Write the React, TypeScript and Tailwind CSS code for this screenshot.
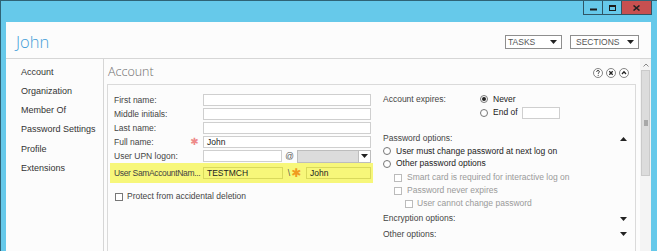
import React from 'react'

const navItems = ['Account', 'Organization', 'Member Of', 'Password Settings', 'Profile', 'Extensions']

function TriDown({ className = '' }: { className?: string }) {
  return (
    <svg width="7" height="4" viewBox="0 0 7 4" className={className}>
      <path d="M0 0H7L3.5 4Z" fill="#222" />
    </svg>
  )
}

function TriUp() {
  return (
    <svg width="7" height="4" viewBox="0 0 7 4">
      <path d="M0 4H7L3.5 0Z" fill="#222" />
    </svg>
  )
}

function Radio({ on = false }: { on?: boolean }) {
  return (
    <span className="w-[8px] h-[8px] rounded-full border border-[#777] bg-white flex items-center justify-center shrink-0">
      {on && <span className="w-[4px] h-[4px] rounded-full bg-[#222]" />}
    </span>
  )
}

function Check({ dim = false }: { dim?: boolean }) {
  return <span className={`w-[8px] h-[8px] border bg-white shrink-0 ${dim ? 'border-[#bbb]' : 'border-[#777]'}`} />
}

function Input({ w, yellow = false, value = '' }: { w: string; yellow?: boolean; value?: string }) {
  return (
    <div className={`${w} h-[12px] border flex items-center pl-[3px] text-[8.5px] text-[#222] ${yellow ? 'bg-[#f7f77a] border-[#d9d95c]' : 'bg-white border-[#cfcfcf]'}`}>
      {value}
    </div>
  )
}

function Star({ color, size }: { color: string; size: string }) {
  return <span className={`font-['DejaVu_Sans',sans-serif] leading-none ${size} ${color}`}>✱</span>
}

function CircleIcon({ kind }: { kind: 'help' | 'close' | 'up' }) {
  return (
    <svg width="10" height="10" viewBox="0 0 10 10">
      <circle cx="5" cy="5" r="4.5" fill="#fff" stroke="#666" strokeWidth="0.8" />
      {kind === 'help' && (
        <>
          <path d="M3.6 3.8C3.6 2.9 4.2 2.5 5 2.5C5.8 2.5 6.4 3 6.4 3.7C6.4 4.6 5.2 4.7 5.2 5.8" fill="none" stroke="#222" strokeWidth="0.9" />
          <circle cx="5.2" cy="7.2" r="0.55" fill="#222" />
        </>
      )}
      {kind === 'close' && <path d="M3.3 3.3L6.7 6.7M6.7 3.3L3.3 6.7" stroke="#222" strokeWidth="1.3" />}
      {kind === 'up' && <path d="M3 6L5 3.8L7 6" fill="none" stroke="#222" strokeWidth="1.3" />}
    </svg>
  )
}

export default function App() {
  return (
    <div className="w-[657px] h-[251px] overflow-hidden bg-[#66c9ea] border-l border-t border-[#2f6376] flex flex-col font-['Liberation_Sans',Arial,sans-serif] text-[#333]">
      {/* title bar */}
      <div className="h-[21px] shrink-0 flex justify-end items-start pr-[5px]">
        <div className="flex h-[14px] border border-t-0 border-[#2f5565]">
          <div className="w-[19px] flex items-center justify-center border-r border-[#2f5565]">
            <svg width="7" height="6" viewBox="0 0 7 6">
              <rect x="0" y="3.5" width="7" height="2" fill="#1d1d1d" />
            </svg>
          </div>
          <div className="w-[19px] flex items-center justify-center border-r border-[#2f5565]">
            <svg width="7" height="6" viewBox="0 0 7 6">
              <rect x="0.5" y="0.5" width="6" height="5" fill="none" stroke="#1d1d1d" strokeWidth="1" />
              <rect x="0" y="0" width="7" height="2" fill="#1d1d1d" />
            </svg>
          </div>
          <div className="w-[29px] bg-[#c75050] flex items-center justify-center">
            <svg width="7" height="6" viewBox="0 0 7 6">
              <path d="M0.5 0.5L6.5 5.5M6.5 0.5L0.5 5.5" stroke="#222" strokeWidth="1.6" />
            </svg>
          </div>
        </div>
      </div>

      <div className="flex-1 ml-[5px] mr-[6px] bg-[#fcfcfc] flex flex-col min-h-0">
        {/* header */}
        <div className="h-[37px] shrink-0 border-b border-[#d6d6d6] flex items-center justify-between pl-[10px] pr-[12px] pt-[4px]">
          <span className="font-['Open_Sans',sans-serif] font-light text-[16.5px] text-[#3f9dd8] leading-none">John</span>
          <div className="flex gap-[8px]">
            <div className="w-[57px] h-[14px] border border-[#8e8e8e] bg-white flex items-center justify-between pl-[2px] pr-[4px] text-[8.5px] text-[#555]">
              TASKS <TriDown />
            </div>
            <div className="w-[69px] h-[14px] border border-[#8e8e8e] bg-white flex items-center justify-between pl-[5px] pr-[4px] text-[8.5px] text-[#555]">
              SECTIONS <TriDown />
            </div>
          </div>
        </div>

        <div className="flex-1 flex min-h-0">
          {/* nav */}
          <div className="w-[98px] shrink-0 border-r border-[#d6d6d6] pl-[15px] pt-[4px] flex flex-col text-[9px] text-[#333]">
            {navItems.map(n => (
              <div key={n} className="h-[19.2px] flex items-center">{n}</div>
            ))}
          </div>

          {/* main */}
          <div className="flex-1 flex min-w-0">
            <div className="flex-1 flex flex-col pl-[3px] pr-[4px] min-w-0">
              <div className="h-[25px] shrink-0 flex items-center justify-between pl-[1px] pr-[7px]">
                <span className="font-['Open_Sans',sans-serif] font-light text-[12.5px] text-[#6f6f6f] leading-none pt-[2px]">Account</span>
                <div className="flex gap-[3px] mt-[3px]">
                  <CircleIcon kind="help" />
                  <CircleIcon kind="close" />
                  <CircleIcon kind="up" />
                </div>
              </div>

              <div className="flex-1 border border-b-0 border-[#dadada] flex text-[8.5px] text-[#444]">
                {/* left column */}
                <div className="w-[265px] shrink-0 pl-[2px] pt-[8px] flex flex-col">
                  {['First name:', 'Middle initials:', 'Last name:'].map(l => (
                    <div key={l} className="h-[14px] flex items-center pl-[4px]">
                      <span className="w-[89px]">{l}</span>
                      <Input w="w-[168px]" />
                    </div>
                  ))}
                  <div className="h-[14px] flex items-center pl-[4px]">
                    <span className="w-[72px]">Full name:</span>
                    <span className="w-[17px] flex justify-center"><Star color="text-[#ee8a8a]" size="text-[10px]" /></span>
                    <Input w="w-[168px]" value="John" />
                  </div>
                  <div className="h-[14px] flex items-center pl-[4px]">
                    <span className="w-[89px]">User UPN logon:</span>
                    <Input w="w-[79px]" />
                    <span className="w-[15px] text-center text-[#555]">@</span>
                    <div className="w-[74px] h-[13px] border border-[#bdbdbd] bg-[#dcdcdc] flex justify-end">
                      <div className="w-[12px] bg-white border-l border-[#bdbdbd] flex items-center justify-center">
                        <TriDown />
                      </div>
                    </div>
                  </div>
                  <div className="h-[20px] bg-[#f7f77a] flex items-center pl-[4px] w-[263px]">
                    <span className="w-[89px] shrink-0 whitespace-nowrap text-[8.5px] tracking-[-0.35px]">User SamAccountNam...</span>
                    <Input w="w-[80px]" yellow value="TESTMCH" />
                    <span className="w-[23px] flex items-center justify-center gap-[1px] text-[#555]">
                      \<Star color="text-[#f09a20]" size="text-[12px]" />
                    </span>
                    <Input w="w-[65px]" yellow value="John" />
                  </div>
                  <div className="mt-[9px] h-[9px] flex items-center gap-[4px] pl-[5px]">
                    <Check />
                    <span>Protect from accidental deletion</span>
                  </div>
                </div>

                {/* right column */}
                <div className="flex-1 pl-[10px] pr-[8px] pt-[7px] flex flex-col">
                  <div className="h-[14px] flex items-center">
                    <span className="w-[97px]">Account expires:</span>
                    <Radio on />
                    <span className="ml-[5px] text-[#222]">Never</span>
                  </div>
                  <div className="h-[13px] flex items-center">
                    <span className="w-[97px]" />
                    <Radio />
                    <span className="ml-[5px] text-[#222]">End of</span>
                    <span className="ml-[4px] w-[38px] h-[12px] border border-[#cfcfcf] bg-white" />
                  </div>
                  <div className="h-[13px] mt-[13px] flex items-center justify-between">
                    <span>Password options:</span>
                    <TriUp />
                  </div>
                  <div className="h-[12.5px] flex items-center gap-[5px] text-[#222]">
                    <Radio /> <span>User must change password at next log on</span>
                  </div>
                  <div className="h-[12.5px] flex items-center gap-[5px] text-[#222]">
                    <Radio /> <span>Other password options</span>
                  </div>
                  <div className="h-[13px] mt-[1px] pl-[11px] flex items-center gap-[5px] text-[#9a9a9a]">
                    <Check dim /> <span>Smart card is required for interactive log on</span>
                  </div>
                  <div className="h-[13px] pl-[11px] flex items-center gap-[5px] text-[#9a9a9a]">
                    <Check dim /> <span>Password never expires</span>
                  </div>
                  <div className="h-[13px] pl-[22px] flex items-center gap-[4px] text-[#9a9a9a]">
                    <Check dim /> <span>User cannot change password</span>
                  </div>
                  <div className="h-[13px] mt-[2px] flex items-center justify-between">
                    <span>Encryption options:</span>
                    <TriDown />
                  </div>
                  <div className="h-[13px] mt-[2.5px] flex items-center justify-between">
                    <span>Other options:</span>
                    <TriDown />
                  </div>
                </div>
              </div>
            </div>

            {/* scrollbar */}
            <div className="w-[11px] shrink-0 bg-[#f4f4f4] flex flex-col items-center">
              <div className="h-[11px] flex items-center justify-center">
                <svg width="6" height="4" viewBox="0 0 6 4">
                  <path d="M0.5 3.5L3 1L5.5 3.5" fill="none" stroke="#888" strokeWidth="1" />
                </svg>
              </div>
              <div className="w-[9px] h-[106px] bg-[#dcdcdc] border border-[#cacaca] flex items-center justify-center">
                <span className="w-[4px] h-[6px] bg-[#a8a8a8]" />
              </div>
            </div>
          </div>
        </div>
      </div>
    </div>
  )
}
